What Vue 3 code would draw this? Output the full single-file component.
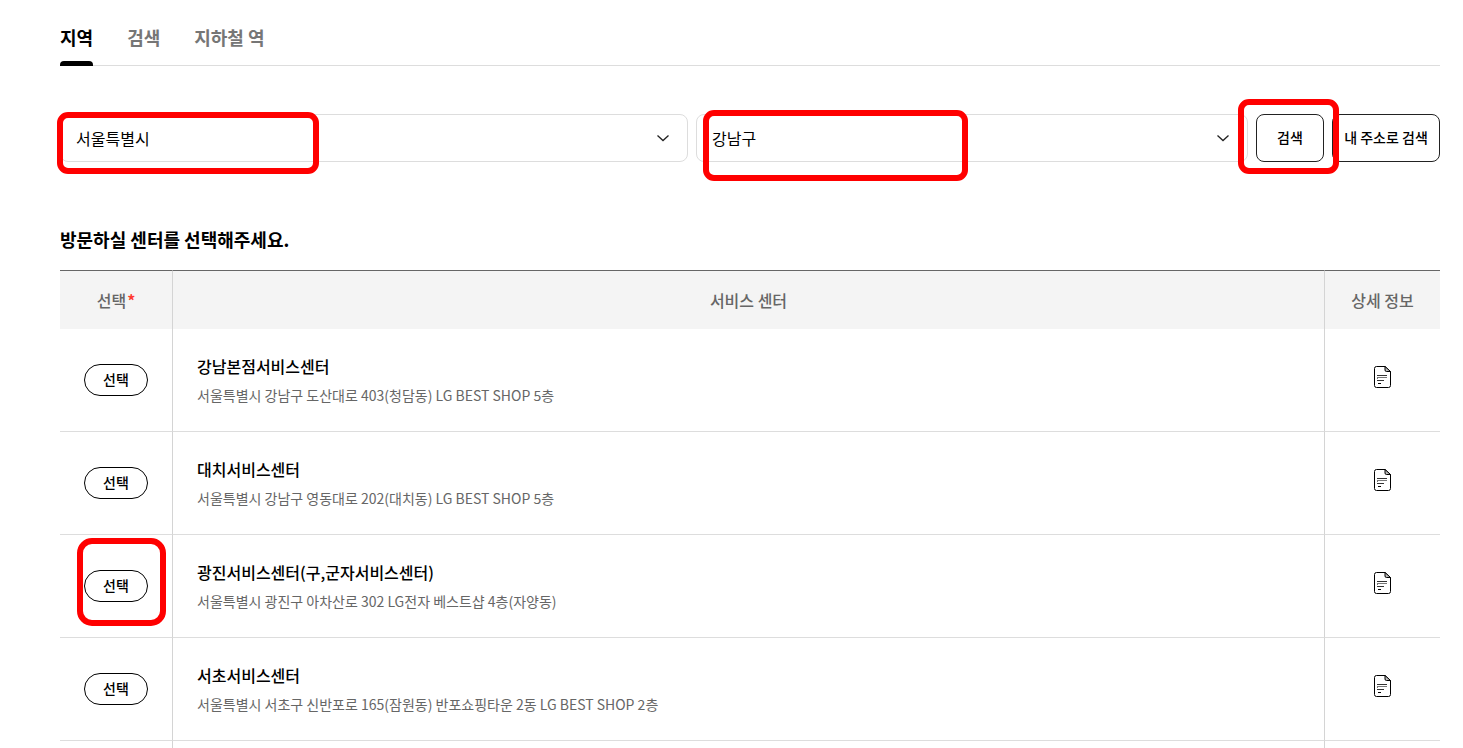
<script setup>
import { ref } from 'vue'

const tabs = ['지역', '검색', '지하철 역']
const activeTab = ref('지역')
const city = ref('서울특별시')
const district = ref('강남구')

const centers = [
  { name: '강남본점서비스센터', address: '서울특별시 강남구 도산대로 403(청담동) LG BEST SHOP 5층' },
  { name: '대치서비스센터', address: '서울특별시 강남구 영동대로 202(대치동) LG BEST SHOP 5층' },
  { name: '광진서비스센터(구,군자서비스센터)', address: '서울특별시 광진구 아차산로 302 LG전자 베스트샵 4층(자양동)', marked: true },
  { name: '서초서비스센터', address: '서울특별시 서초구 신반포로 165(잠원동) 반포쇼핑타운 2동 LG BEST SHOP 2층' },
]
</script>

<template>
  <main class="page">
    <nav class="tabs">
      <button
        v-for="tab in tabs"
        :key="tab"
        type="button"
        class="tab"
        :class="{ active: tab === activeTab }"
        @click="activeTab = tab"
      >{{ tab }}</button>
    </nav>

    <form class="search" @submit.prevent>
      <div class="field field-city">
        <select v-model="city" class="select" aria-label="시/도">
          <option>서울특별시</option>
        </select>
        <svg class="chevron" viewBox="0 0 12 8" aria-hidden="true"><path d="M.5 1.5 6 6.5l5.5-5" /></svg>
        <span class="mark mark-city"></span>
      </div>
      <div class="field field-district">
        <select v-model="district" class="select" aria-label="시/군/구">
          <option>강남구</option>
        </select>
        <svg class="chevron" viewBox="0 0 12 8" aria-hidden="true"><path d="M.5 1.5 6 6.5l5.5-5" /></svg>
        <span class="mark mark-district"></span>
      </div>
      <div class="action">
        <button type="submit" class="button button-search">검색</button>
        <span class="mark mark-search"></span>
      </div>
      <button type="button" class="button button-address">내 주소로 검색</button>
    </form>

    <h2 class="title">방문하실 센터를 선택해주세요.</h2>

    <table class="centers">
      <colgroup>
        <col class="col-select" />
        <col />
        <col class="col-detail" />
      </colgroup>
      <thead>
        <tr>
          <th scope="col">선택<span class="required">*</span></th>
          <th scope="col">서비스 센터</th>
          <th scope="col">상세 정보</th>
        </tr>
      </thead>
      <tbody>
        <tr v-for="center in centers" :key="center.name">
          <td class="cell-select">
            <div class="pick-wrap">
              <button type="button" class="pick">선택</button>
              <span v-if="center.marked" class="mark mark-pick"></span>
            </div>
          </td>
          <td class="cell-center">
            <p class="name">{{ center.name }}</p>
            <p class="address">{{ center.address }}</p>
          </td>
          <td class="cell-detail">
            <button type="button" class="detail" :aria-label="center.name + ' 상세 정보'">
              <svg viewBox="0 0 17 22" aria-hidden="true">
                <path d="M2.5.5h8.5l5.5 5v14a2 2 0 0 1-2 2h-12a2 2 0 0 1-2-2v-17a2 2 0 0 1 2-2Z" />
                <path class="fold" d="M11 .5v3.5a1.5 1.5 0 0 0 1.5 1.5h4Z" />
                <path class="lines" d="M3 9.5h10M3 14.5h7" />
                <path class="lines soft" d="M3 11.5h10M3 12.5h1" />
                <path d="M4 17.5h3" />
              </svg>
            </button>
          </td>
        </tr>
        <tr class="next-row">
          <td></td>
          <td></td>
          <td></td>
        </tr>
      </tbody>
    </table>
  </main>
</template>

<style>
body {
  background: #fff;
}
</style>

<style scoped>
.page {
  box-sizing: border-box;
  padding: 16px 23px 0 60px;
  color: #000;
  font-family: "Noto Sans CJK KR", "Noto Sans", sans-serif;
}

.page button,
.page select {
  margin: 0;
  color: #000;
  font-family: inherit;
  cursor: pointer;
}

.tabs {
  display: flex;
  gap: 34px;
  border-bottom: 1px solid #ddd;
}

.page .tab {
  position: relative;
  height: 49px;
  padding: 0 0 8px;
  border: 0;
  background: none;
  color: #767676;
  font-size: 18px;
  font-weight: 700;
}

.page .tab.active {
  color: #000;
}

.tab.active::after {
  content: "";
  position: absolute;
  right: 0;
  bottom: -1px;
  left: 0;
  height: 5px;
  border-radius: 4px 4px 0 0;
  background: #000;
}

.search {
  display: flex;
  gap: 8px;
  margin-top: 48px;
}

.field,
.action,
.pick-wrap {
  position: relative;
}

.field-city {
  flex: 157 1 0;
}

.field-district {
  flex: 138 1 0;
}

.select {
  appearance: none;
  display: block;
  box-sizing: border-box;
  width: 100%;
  height: 48px;
  padding: 0 40px 0 15px;
  border: 1px solid #ddd;
  border-radius: 8px;
  background: #fff;
  font-size: 16px;
}

.chevron {
  position: absolute;
  top: 20px;
  right: 19px;
  width: 12px;
  height: 8px;
  fill: none;
  stroke: #222;
  stroke-width: 1.3;
  pointer-events: none;
}

.button {
  box-sizing: border-box;
  height: 48px;
  padding: 0 0 2px;
  border: 1px solid #222;
  border-radius: 8px;
  background: #fff;
  font-size: 14px;
  font-weight: 500;
}

.button-search {
  width: 68px;
}

.button-address {
  width: 108px;
}

.mark {
  position: absolute;
  z-index: 1;
  box-sizing: border-box;
  border: 6px solid #f00;
  border-radius: 11px;
  pointer-events: none;
}

.mark-city {
  top: -2px;
  left: -3px;
  width: 262px;
  height: 62px;
}

.mark-district {
  top: -4px;
  left: 7px;
  width: 265px;
  height: 71px;
}

.mark-search {
  top: -15px;
  left: -18px;
  width: 101px;
  height: 75px;
}

.mark-pick {
  top: -32px;
  left: -7px;
  width: 89px;
  height: 88px;
  border-radius: 15px;
}

.title {
  margin: 63px 0 17px;
  font-size: 18px;
  font-weight: 700;
  line-height: 28px;
}

.centers {
  width: 100%;
  border-spacing: 0;
  table-layout: fixed;
}

.col-select {
  width: 113px;
}

.col-detail {
  width: 115px;
}

.centers th {
  height: 58px;
  padding: 0;
  border-top: 1px solid #666;
  background: #f4f4f4;
  color: #666;
  font-size: 16px;
  font-weight: 500;
}

.required {
  margin-left: 1px;
  color: #ff3b30;
  font-weight: 700;
}

.centers td {
  height: 102px;
  padding: 0;
  border-bottom: 1px solid #ddd;
}

.centers th:not(:last-child),
.centers td:not(:last-child) {
  border-right: 1px solid #d4d4d4;
}

.centers .next-row td {
  height: 7px;
  border-bottom: 0;
}

.pick-wrap {
  width: 64px;
  margin: 0 auto;
}

.pick {
  display: block;
  box-sizing: border-box;
  width: 64px;
  height: 32px;
  padding: 0 0 2px;
  border: 1px solid #000;
  border-radius: 16px;
  background: #fff;
  font-size: 14px;
  font-weight: 500;
}

.centers .cell-center {
  padding: 0 24px;
}

.name {
  margin: 0;
  font-size: 16px;
  font-weight: 500;
  line-height: 24px;
}

.address {
  margin: 6px 0 0;
  color: #666;
  font-size: 14px;
  line-height: 22px;
}

.centers .cell-detail {
  padding-bottom: 6px;
  height: 96px;
}

.detail {
  display: block;
  width: 17px;
  height: 22px;
  padding: 0;
  border: 0;
  background: none;
}

.page .detail {
  margin: 0 auto;
}

.detail svg {
  display: block;
  width: 17px;
  height: 22px;
  fill: none;
  stroke: #000;
}

.detail .fold {
  fill: #bbb;
}

.detail .lines {
  stroke: #333;
}

.detail .soft {
  stroke: #777;
}
</style>
